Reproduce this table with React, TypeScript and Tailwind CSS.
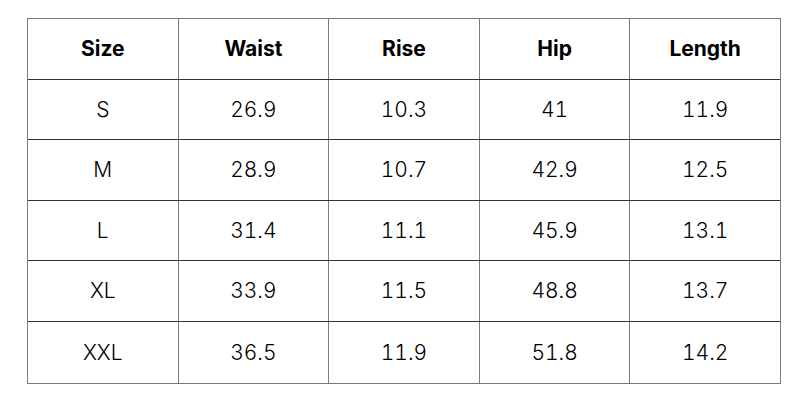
import React from "react";

const headers = ["Size", "Waist", "Rise", "Hip", "Length"];
const rows = [
  ["S", "26.9", "10.3", "41", "11.9"],
  ["M", "28.9", "10.7", "42.9", "12.5"],
  ["L", "31.4", "11.1", "45.9", "13.1"],
  ["XL", "33.9", "11.5", "48.8", "13.7"],
  ["XXL", "36.5", "11.9", "51.8", "14.2"],
];

export default function App() {
  return (
    <div className="w-[800px] h-[400px] bg-white pt-[18px] pl-[27px]" style={{ fontFamily: 'Inter, sans-serif' }}>
      <div className="w-[754px] border border-[#7a7a7a] flex flex-col">
        {[headers, ...rows].map((r, i) => (
          <div key={i} className={`flex h-[60.6px] ${i < rows.length ? "border-b border-[#333]" : ""}`}>
            {r.map((c, j) => (
              <div
                key={j}
                className={`flex-1 flex items-center justify-center text-[21px] text-black ${j < 4 ? "border-r border-[#7a7a7a]" : ""} ${i === 0 ? "font-bold" : "font-light tabular-nums"}`}
              >
                {c}
              </div>
            ))}
          </div>
        ))}
      </div>
    </div>
  );
}
